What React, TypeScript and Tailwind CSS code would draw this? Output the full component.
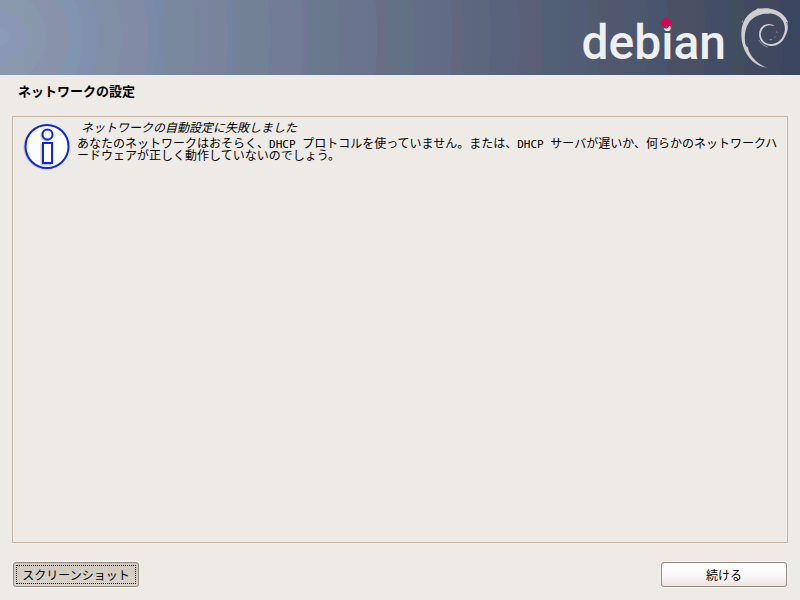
function DebianSwirl() {
  return (
    <svg viewBox="0 0 210 225" className="h-[75px] w-[70px] shrink-0" aria-hidden="true">
      <path
        fill="#d0cdd0"
        d="M112 203 C88 201 66 187 52 165 C40 147 33 122 34 98 C35 66 52 40 76 30 L84 25 C98 27 108 22 120 26 C142 30 157 40 166 52 L174 66 L172 72 C176 84 171 98 167 106 C159 127 141 140 121 138 C100 136 87 121 87 103 C87 84 100 72 116 72 C124 72 130 74 133 79 C120 73 108 75 101 83 C92 92 90 104 95 115 C101 127 112 133 124 132 C140 131 154 121 159 107 C165 96 167 82 161 68 C155 54 141 44 129 42 C118 39 110 43 102 41 C84 45 67 52 56 69 C46 84 43 104 45 124 C46 137 50 139 54 143 C57 165 82 194 112 203 Z"
      />
      <g fill="none" stroke="#bfbdc6" strokeWidth="2" strokeLinecap="round">
        <path d="M87 121 C94 132 104 138 111 141" />
        <path d="M38 62 L37 67" />
        <path d="M120 119 L125 119" />
        <path d="M139 96 L141 97" />
        <path d="M134 112 L136 111" />
        <path d="M159 113 L162 109" />
      </g>
      <path d="M168 67 L172 66 L171 71 Z" fill="#39455f" />
    </svg>
  );
}

function Banner() {
  return (
    <header className="flex h-[75px] w-full items-start justify-end overflow-hidden bg-[linear-gradient(to_right,#8a98b04d,#6f7c954d_300px,#58647c4d_500px,#3b465f4d_800px),radial-gradient(circle_at_0_37px,#8b9db9_0_9px,#8b97b6_9px_27px,#8999aa_27px_46px,#8b92ab_46px_69px,#8096b2_69px_83px,#8090b0_83px_98px,#8090a4_98px_121px,#848ba6_121px_148px,#788aa9_148px_158px,#7489a6_158px_167px,#78889a_167px_195px,#7b839d_195px_228px,#7081a0_228px_237px,#728292_237px_270px,#727a95_270px_303px,#747395_303px_307px,#687889_307px_340px,#6a738d_340px_377px,#6b6c82_377px_386px,#617182_386px_414px,#636c87_414px_452px,#66667b_452px_463px,#5b687c_463px_490px,#59647c_490px_520px,#5b5e73_520px_543px,#516073_543px_563px,#535d76_563px_590px,#505e6b_590px_600px,#53586c_600px_625px,#4b586c_625px_648px,#49546e_648px_668px,#4b5062_668px_705px,#424c66_705px_730px,#414f5b_730px_745px,#41485d_745px_782px,#38455e_782px)]">
      <div className="relative pr-1">
        <div className="font-[Roboto] text-[48px] leading-[86px] font-medium text-[#f0eff0]">
          debian
        </div>
        <svg viewBox="0 0 10 10" className="absolute top-[17px] left-[79px] size-3" aria-hidden="true">
          <path d="M5 .3 Q7 .8 7.500 2.500 Q9.300 3 9.700 5 Q9.300 7 7.500 7.500 Q7 9.200 5 9.700 Q3 9.200 2.500 7.500 Q.7 7 .3 5 Q.7 3 2.500 2.500 Q3 .8 5 .3Z" fill="#d70751" />
        </svg>
      </div>
      <DebianSwirl />
    </header>
  );
}

function InfoIcon() {
  return (
    <svg viewBox="0 0 50 50" className="size-[50px] shrink-0" aria-hidden="true">
      <circle cx="22.500" cy="26.500" r="22" fill="#c9c7c3" />
      <circle cx="24" cy="25.500" r="21.500" fill="#fff" stroke="#0a26f0" strokeWidth="2" />
      <g fill="none" stroke="#c8c8cc" strokeWidth="2">
        <circle cx="23.500" cy="14.500" r="5" />
        <path d="M18.500 23V43.500H28" />
      </g>
      <circle cx="24.500" cy="13.500" r="5" fill="#fff" stroke="#0a26f0" strokeWidth="2" />
      <rect x="20" y="22" width="9" height="20" fill="#fff" stroke="#0a26f0" strokeWidth="2" />
    </svg>
  );
}

function Latin({ children }: { children: string }) {
  return <span className="font-['DejaVu_Sans_Mono'] text-[11px] leading-[0]">{children}</span>;
}

export default function App() {
  return (
    <div className="flex min-h-screen flex-col bg-[#eeebe7] font-['Noto_Sans_CJK_JP',sans-serif] text-xs text-black">
      <Banner />
      <main className="flex flex-1 flex-col px-3 pb-[13px]">
        <h1 className="mt-[7px] px-1.5 text-[13px] leading-[18px] font-bold">ネットワークの設定</h1>
        <section className="mt-4 flex flex-1 items-start border border-[#c4b5a5] pt-1 pr-1 pl-2.5">
          <InfoIcon />
          <div className="flex-1 pl-1">
            <h2 className="px-1 leading-[12px] italic">ネットワークの自動設定に失敗しました</h2>
            <p className="mt-1 leading-[12px] [line-break:anywhere]">
              あなたのネットワークはおそらく、<Latin>DHCP </Latin>
              プロトコルを使っていません。または、<Latin>DHCP </Latin>
              サーバが遅いか、何らかのネットワークハードウェアが正しく動作していないのでしょう。
            </p>
          </div>
        </section>
        <footer className="mt-[19px] flex justify-between px-px">
          <button
            type="button"
            className="h-[25px] w-[126px] rounded-[3px] border border-[#95887c] bg-linear-to-b from-[#d0c9c0] to-[#dad4cb] p-0.5 shadow-[0_0_0_1px_#f7f5f2]"
          >
            <span className="flex h-full items-center justify-center border border-dotted border-black">
              スクリーンショット
            </span>
          </button>
          <button
            type="button"
            className="h-[25px] w-[126px] rounded-[3px] border border-[#95887c] bg-linear-to-b from-white via-[#fcfaf9] to-[#eee5e2] shadow-[0_0_0_1px_#f7f5f2]"
          >
            続ける
          </button>
        </footer>
      </main>
    </div>
  );
}
